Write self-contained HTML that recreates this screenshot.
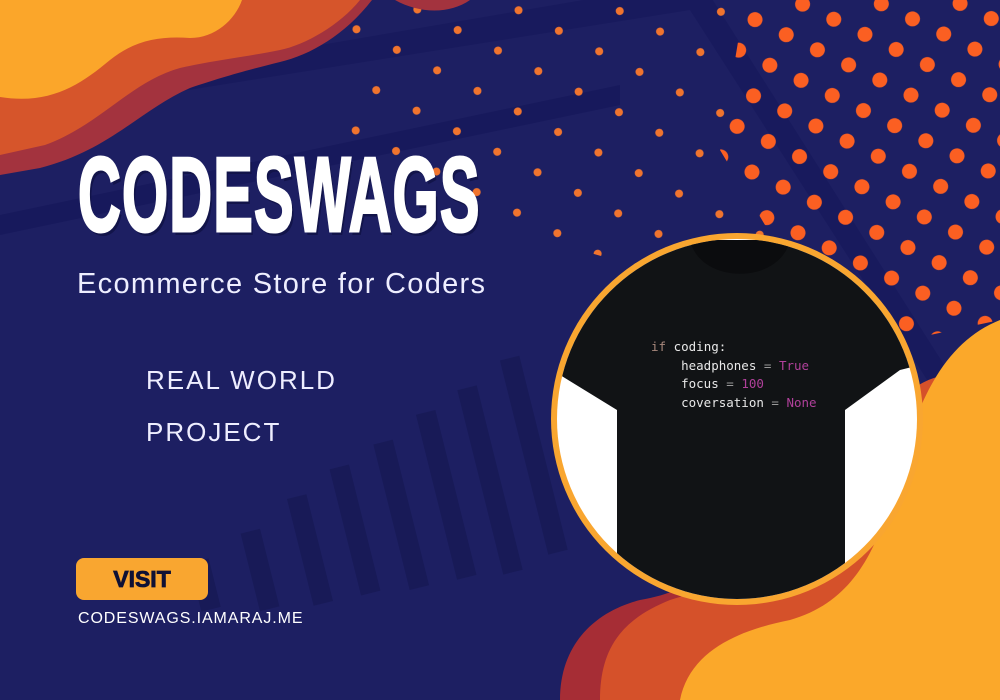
<!DOCTYPE html>
<html><head><meta charset="utf-8"><style>
html,body{margin:0;padding:0}
body{width:1000px;height:700px;overflow:hidden;position:relative;background:#1d1f62;font-family:"Liberation Sans",sans-serif}
.abs{position:absolute}
</style></head><body>
<svg class="abs" style="left:0;top:0" width="1000" height="700" viewBox="0 0 1000 700">
<defs>
<pattern id="pb" width="50" height="48" patternUnits="userSpaceOnUse" patternTransform="rotate(-18)">
<circle cx="12" cy="12" r="7.5" fill="#fb5f22"/><circle cx="37" cy="36" r="7.5" fill="#fb5f22"/></pattern>
<pattern id="ps" width="64" height="64" patternUnits="userSpaceOnUse" patternTransform="rotate(-18)">
<circle cx="10" cy="10" r="4" fill="#f0742e"/><circle cx="42" cy="42" r="4" fill="#f0742e"/></pattern>
</defs>
<g fill="#171a55" opacity="0.8">
<rect x="195" y="560" width="20" height="50" transform="rotate(-14 205 585)"/>
<rect x="250" y="530" width="20" height="80" transform="rotate(-14 260 570)"/>
<rect x="300" y="495" width="20" height="110" transform="rotate(-14 310 550)"/>
<rect x="345" y="465" width="20" height="130" transform="rotate(-14 355 530)"/>
<rect x="390" y="440" width="20" height="150" transform="rotate(-14 400 510)"/>
<rect x="435" y="410" width="20" height="170" transform="rotate(-14 445 490)"/>
<rect x="480" y="385" width="20" height="190" transform="rotate(-14 490 480)"/>
<rect x="525" y="355" width="20" height="200" transform="rotate(-14 535 460)"/>
</g>
<path d="M0 215 L620 85 L620 105 L0 235Z" fill="#15175a" opacity="0.7"/>
<path d="M0 100 L700 -20 L960 390 L940 400 L690 10 L0 120Z" fill="#15175a" opacity="0.6"/>
<path d="M745 0 L1000 0 L1000 320 L930 335 L860 330 L780 250 L720 150Z" fill="url(#pb)"/>
<path d="M350 0 L745 0 L720 150 L780 250 L860 330 L720 290 L580 250 L450 190 L350 140Z" fill="url(#ps)"/>
<path d="M0 0 L372 0 C345 35 310 55 280 62 C240 72 220 78 190 88 C140 110 110 150 40 168 L0 175Z" fill="#a3333e"/>
<path d="M0 0 L360 0 C340 25 305 45 280 50 C240 58 215 60 180 68 C130 82 100 125 45 145 L0 155Z" fill="#d6552b"/>
<path d="M0 0 L242 0 C235 20 215 38 190 38 C160 36 135 40 110 60 C80 85 50 105 0 97Z" fill="#fba62a"/>
<path d="M395 0 L470 0 C450 14 420 14 395 0Z" fill="#a3333e"/>
<path d="M560 700 C560 640 600 610 640 600 C700 590 720 560 760 520 C820 470 870 440 930 380 L1000 360 L1000 700Z" fill="#a62d35"/>
<path d="M600 700 C600 650 620 620 670 600 C720 585 760 570 800 540 C850 500 860 450 900 400 C930 370 960 370 1000 380 L1000 700Z" fill="#d5512a"/>
<path d="M680 700 C690 650 740 630 790 620 C860 600 880 540 900 470 C920 390 950 340 1000 320 L1000 700Z" fill="#fba82a"/>
<circle cx="737" cy="419" r="186" fill="#f9a630"/>
<clipPath id="cc"><circle cx="737" cy="419" r="180"/></clipPath>
<g clip-path="url(#cc)">
<rect x="550" y="230" width="380" height="380" fill="#ffffff"/>
<path d="M555 240 L920 240 L920 365 L900 370 L845 410 L845 610 L617 610 L617 410 L560 375 L555 370Z" fill="#111315"/>
<path d="M690 240 C700 285 780 285 790 240Z" fill="#0b0c0e"/>
</g>
</svg>
<div class="abs" style="left:651px;top:338px;font:12.5px 'DejaVu Sans Mono',monospace;line-height:18.5px;color:#e8e8e8;white-space:pre"><span style="color:#a8887c">if</span> coding:
    headphones <span style="color:#999">=</span> <span style="color:#b0409a">True</span>
    focus <span style="color:#999">=</span> <span style="color:#b0409a">100</span>
    coversation <span style="color:#999">=</span> <span style="color:#b0409a">None</span></div>
<div class="abs" style="left:78px;top:142px;font-weight:bold;font-size:106px;line-height:106px;color:#fff;transform:scaleX(0.56);transform-origin:0 0;white-space:nowrap;text-shadow:4px 4px 0 #12144a;letter-spacing:2px;-webkit-text-stroke:3px #fff">CODESWAGS</div>
<div class="abs" style="left:77px;top:268px;font-size:29px;color:#eef;white-space:nowrap;letter-spacing:1.3px">Ecommerce Store for Coders</div>
<div class="abs" style="left:146px;top:354px;font-size:26px;line-height:52px;color:#eef;letter-spacing:2px">REAL WORLD<br>PROJECT</div>
<div class="abs" style="left:76px;top:558px;width:132px;height:42px;background:#f9a630;border-radius:8px;text-align:center;font-weight:bold;font-size:23px;line-height:42px;color:#0f1135;-webkit-text-stroke:0.8px #0f1135">VISIT</div>
<div class="abs" style="left:78px;top:610px;font-size:16px;color:#fff;letter-spacing:0.9px">CODESWAGS.IAMARAJ.ME</div>
</body></html>
